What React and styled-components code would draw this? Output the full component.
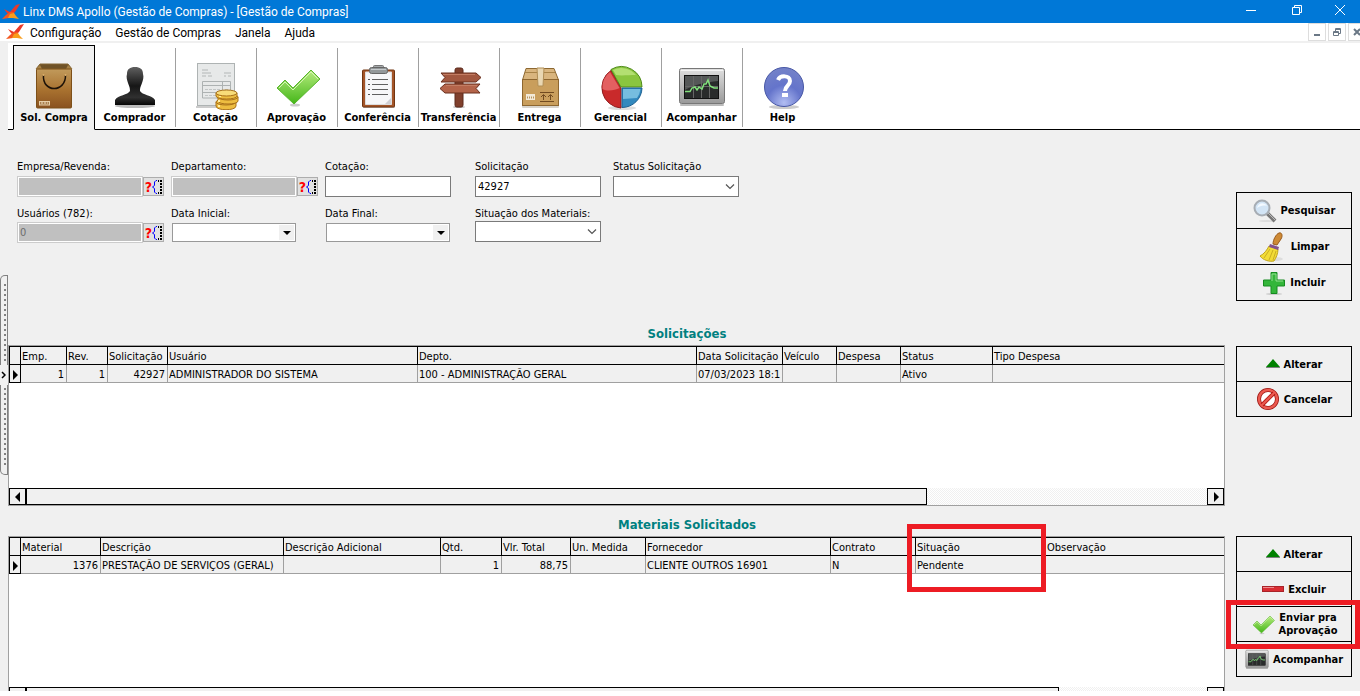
import React, { useState } from 'react'
import styled, { createGlobalStyle, css } from 'styled-components';

const SOLICITACAO_COLS = [
  { title: 'Emp.', width: 46, align: 'right', value: '1' },
  { title: 'Rev.', width: 41, align: 'right', value: '1' },
  { title: 'Solicitação', width: 60, align: 'right', value: '42927' },
  { title: 'Usuário', width: 250, value: 'ADMINISTRADOR DO SISTEMA' },
  { title: 'Depto.', width: 279, value: '100 - ADMINISTRAÇÃO GERAL' },
  { title: 'Data Solicitação', width: 86, value: '07/03/2023 18:1' },
  { title: 'Veículo', width: 54, value: '' },
  { title: 'Despesa', width: 64, value: '' },
  { title: 'Status', width: 92, value: 'Ativo' },
  { title: 'Tipo Despesa', value: '' },
];

const MATERIAL_COLS = [
  { title: 'Material', width: 80, align: 'right', value: '1376' },
  { title: 'Descrição', width: 183, value: 'PRESTAÇÃO DE SERVIÇOS (GERAL)' },
  { title: 'Descrição Adicional', width: 157, value: '' },
  { title: 'Qtd.', width: 61, align: 'right', value: '1' },
  { title: 'Vlr. Total', width: 69, align: 'right', value: '88,75' },
  { title: 'Un. Medida', width: 75, value: '' },
  { title: 'Fornecedor', width: 185, value: 'CLIENTE OUTROS 16901' },
  { title: 'Contrato', width: 85, value: 'N' },
  { title: 'Situação', width: 130, value: 'Pendente', marked: true },
  { title: 'Observação', value: '' },
];

/* ---------- icons ---------- */

function Logo() {
  return (
    <svg width="18" height="16" viewBox="0 0 18 16" aria-hidden="true">
      <path d="M18 0 L14 1 L8 8 L2 5 L5 9 L7 11 L10 11 L13 8 Z" fill="#e8392b" />
      <path d="M8 8 L4 11 L0 15 L7 14 L12 11 L12 8 Z" fill="#f4581f" />
      <path d="M8 10 L12 9 L14 12 L17 15 L11 14 L6 14 Z" fill="#f99d1c" />
    </svg>
  )
}

function BagIcon() {
  return (
    <svg width="48" height="48" viewBox="0 0 48 48" aria-hidden="true">
      <defs>
        <linearGradient id="bag" x1="0" y1="0" x2="0" y2="1">
          <stop offset="0" stopColor="#c19a5b" />
          <stop offset=".55" stopColor="#a8712f" />
          <stop offset="1" stopColor="#8a5220" />
        </linearGradient>
      </defs>
      <path d="M10 2 H38 L42 7 H6 Z" fill="#6f5227" stroke="#856637" />
      <path d="M6 7 L10 3 L12 7 M42 7 L38 3 L36 7" fill="#a78145" />
      <rect x="6.500" y="7" width="35" height="39" rx="1" fill="url(#bag)" stroke="#7d5019" />
      <path d="M13.500 13 C12 31 36 31 35.500 13" fill="none" stroke="#1d1208" strokeWidth="1.500" />
      <circle cx="13.500" cy="13" r="1" fill="#ddb06c" />
      <circle cx="35.500" cy="13" r="1" fill="#ddb06c" />
      <rect x="9.500" y="39.500" width="10" height="3.500" fill="#a97f4c" stroke="#e6cfa8" />
      <path d="M11 41 H18" stroke="#f2dfc0" strokeDasharray="2 1" />
    </svg>
  )
}

function PersonIcon() {
  return (
    <svg width="48" height="48" viewBox="0 0 48 48" aria-hidden="true">
      <defs>
        <linearGradient id="person" x1="0" y1="0" x2="0" y2="1">
          <stop offset="0" stopColor="#606060" />
          <stop offset=".5" stopColor="#161616" />
          <stop offset=".8" stopColor="#303030" />
          <stop offset="1" stopColor="#050505" />
        </linearGradient>
      </defs>
      <ellipse cx="24" cy="44" rx="20" ry="2" fill="#bbb" />
      <path d="M24 5 C29 5 32 7 32 12 C33 15 32 18 31 21 C30 24 29 25 29 29 C31 33 41 33 44 38 L44 43 H4 L4 38 C7 33 17 33 19 29 C19 25 18 24 17 21 C16 18 15 15 16 12 C16 7 19 5 24 5 Z" fill="url(#person)" />
    </svg>
  )
}

function QuoteIcon() {
  return (
    <svg width="48" height="48" viewBox="0 0 48 48" aria-hidden="true">
      <rect x="4" y="44" width="36" height="2" fill="#ccc" />
      <rect x="5.500" y="1.500" width="37" height="42" fill="#e7e9e9" stroke="#aeb3b3" />
      <path d="M10 8 H16 M10 11 H19 M10 14 H14 M16 14 H20 M32 11 H39 M32 14 H34 M36 14 H39" stroke="#b3b7b7" />
      <path d="M10.500 19.500 H38.500 V36 H10.500 Z M10.500 23.500 H38.500 M10.500 30.500 H38.500 M30.500 19 V36" fill="none" stroke="#adb2b2" />
      <path d="M13 27.500 H28 M33 27.500 H37 M13 33.500 H28" stroke="#c2c6c6" strokeDasharray="3 1" />
      <g fill="#edbd40" stroke="#a9711a">
        <path d="M24 40 V44 C24 49 44 49 44 44 V40" />
        <ellipse cx="34" cy="40" rx="10" ry="3" />
        <path d="M26 35 V39 C26 43 46 43 46 39 V35" />
        <ellipse cx="36" cy="35" rx="10" ry="3" />
        <path d="M24 31 V34 C24 38 45 38 45 34 V31" />
        <ellipse cx="34.500" cy="31" rx="10.500" ry="3" fill="#f8dc79" />
      </g>
      <path d="M27 38 V40 M27 43 V45 M28 34 V35" stroke="#fff0a8" strokeWidth="2" />
    </svg>
  )
}

function CheckIcon({ size = 48 }) {
  return (
    <svg width={size} height={size} viewBox="0 0 48 48" aria-hidden="true">
      <defs>
        <linearGradient id="check" x1="0" y1="0" x2="0" y2="1">
          <stop offset="0" stopColor="#b7ec7f" />
          <stop offset="1" stopColor="#44b618" />
        </linearGradient>
      </defs>
      <ellipse cx="22" cy="43" rx="5" ry="1.500" fill="#ccc" />
      <path d="M4 26 L12 18 L20 26 L38 8 L47 17 L21 42 Z" fill="url(#check)" stroke="#58b52d" />
      <path d="M6 26 L12 20 L20 28 L38 10 L45 17" fill="none" stroke="#d5f5b3" />
    </svg>
  )
}

function ClipboardIcon() {
  return (
    <svg width="48" height="48" viewBox="0 0 48 48" aria-hidden="true">
      <rect x="9" y="44" width="32" height="2" rx="1" fill="#bbb" />
      <rect x="8.500" y="8" width="32" height="37" rx="1" fill="#a45529" stroke="#713511" />
      <path d="M11.500 10 H37.500 V42.500 H11.500 Z" fill="#f7f7f9" stroke="#ddd" />
      <path d="M31 42 L37 36 V42 Z" fill="#cfcfd4" />
      <path d="M18 17.500 H34 M18 22.500 H34 M18 27.500 H34 M18 32.500 H34" stroke="#606060" />
      <path d="M14 17.500 H16 M14 22.500 H16 M14 27.500 H16 M14 32.500 H16" stroke="#555" />
      <rect x="19.500" y="3.500" width="10" height="4" rx="1" fill="#a6aaac" stroke="#777" />
      <rect x="15.500" y="5.500" width="18" height="6" rx="2" fill="#93989a" stroke="#666" />
      <path d="M17 7.500 H32" stroke="#c7cbcd" />
    </svg>
  )
}

function SignIcon() {
  return (
    <svg width="48" height="48" viewBox="0 0 48 48" aria-hidden="true">
      <ellipse cx="24" cy="45" rx="6" ry="1" fill="#bbb" />
      <rect x="20" y="6" width="8" height="39" rx="2" fill="#80402d" stroke="#5c2a1c" />
      <path d="M6 11 H41 L46 15.500 L41 20 H6 L10 15.500 Z" fill="#a25840" stroke="#6a301f" />
      <path d="M10 22 H45 L41 26.500 L45 31 H10 L5 26.500 Z" fill="#b4644a" stroke="#6a301f" />
      <path d="M8 12.500 H40 M11 23.500 H42" stroke="#c37d63" />
    </svg>
  )
}

function BoxIcon() {
  return (
    <svg width="48" height="48" viewBox="0 0 48 48" aria-hidden="true">
      <rect x="6" y="43" width="37" height="3" rx="1" fill="#d8d4cc" />
      <path d="M10 6.500 H38 L42.500 18 H6.500 Z" fill="#d9b57e" stroke="#8d6832" />
      <path d="M9 10.500 H39" stroke="#a88347" />
      <rect x="6.500" y="17.500" width="36" height="26" fill="#c99e5c" stroke="#8e6730" />
      <path d="M21 6 H28 L27 24 H22 Z" fill="#e9d7b2" stroke="#b18e55" />
      <rect x="10" y="32" width="9" height="6" fill="#f3ead8" />
      <path d="M11 35.500 H18" stroke="#b59361" strokeWidth="2" strokeDasharray="1 1" />
      <path d="M24 30.500 H38 M24 39.500 H38 M27.500 38 V33 M25 35 L27.500 32.500 L30 35 M34.500 38 V33 M32 35 L34.500 32.500 L37 35" fill="none" stroke="#714b20" />
    </svg>
  )
}

function PieIcon() {
  return (
    <svg width="48" height="48" viewBox="0 0 48 48" aria-hidden="true">
      <ellipse cx="25" cy="46" rx="14" ry="2" fill="#ddd" />
      <path d="M24 26 L14 8.500 A20.500 20.500 0 0 0 24 46 Z" fill="#c92a2b" stroke="#8f1a1c" />
      <path d="M24 25 L14 7.500 A20.500 20.500 0 0 1 45 25 Z" fill="#8ac53f" stroke="#4e8b19" />
      <path d="M25 26 H45 A20 20 0 0 1 25 45.500 Z" fill="#3289be" stroke="#1b5f91" />
      <path d="M26 27 H43.500 A19 19 0 0 1 40 36 L26 37 Z" fill="#76bddf" />
      <path d="M13 10 A19 19 0 0 0 5.500 27 C11 30 18 28 22.500 26 Z" fill="#e36061" />
      <path d="M16 8 A19 19 0 0 1 39 13 C32 13 24 14 19 13 Z" fill="#b3df71" />
    </svg>
  )
}

function MonitorIcon({ width = 48, height = 48 }) {
  return (
    <svg width={width} height={height} viewBox="0 0 48 48" aria-hidden="true">
      <defs>
        <linearGradient id="monitor" x1="0" y1="0" x2="0" y2="1">
          <stop offset="0" stopColor="#e0e0e0" />
          <stop offset="1" stopColor="#999" />
        </linearGradient>
      </defs>
      <rect x="2" y="42" width="44" height="2" rx="1" fill="#bbb" />
      <rect x="1.500" y="6.500" width="45" height="35" rx="2" fill="url(#monitor)" stroke="#777" />
      <path d="M3 8.500 H45" stroke="#f5f5f5" />
      <rect x="6.500" y="13.500" width="34" height="23" fill="#292b2b" stroke="#111" />
      <path d="M7 14 H40 V19 C28 20 15 23 7 28 Z" fill="#555858" />
      <path d="M15.500 14 V36 M23.500 14 V36 M31.500 14 V36 M7 24.500 H40" stroke="#666" />
      <path d="M7 29.500 H12 L14 26 L17 25 L19 28 L21 25 L24 27 L26 22 L28 22 L30 18 L32 24 L34 25 L36 26 H40" fill="none" stroke="#82e07c" strokeWidth="1.500" />
    </svg>
  )
}

function HelpIcon() {
  return (
    <svg width="48" height="48" viewBox="0 0 48 48" aria-hidden="true">
      <defs>
        <radialGradient id="help" cx=".5" cy=".9" r=".9">
          <stop offset="0" stopColor="#b1bdf2" />
          <stop offset=".5" stopColor="#6474cb" />
          <stop offset="1" stopColor="#7482c8" />
        </radialGradient>
      </defs>
      <ellipse cx="25" cy="45" rx="15" ry="2" fill="#ccc" />
      <circle cx="25" cy="25" r="19.500" fill="url(#help)" stroke="#4757a5" />
      <path d="M19 18 C21 13 31 13 31 19 C31 24 26 23.500 26 29" fill="none" stroke="#fff" strokeWidth="4" />
      <rect x="23" y="31" width="6" height="4" fill="#fff" />
    </svg>
  )
}

function SearchIcon() {
  return (
    <svg width="24" height="24" viewBox="0 0 24 24" aria-hidden="true">
      <ellipse cx="14" cy="22" rx="8" ry="1" fill="#ddd" />
      <path d="M14 14 L22 22" stroke="#777" strokeWidth="4" />
      <path d="M14 13 L22 21" stroke="#bbb" strokeWidth="1" />
      <circle cx="9" cy="9" r="7.500" fill="#d2e4f5" stroke="#a7adb4" strokeWidth="2" />
      <path d="M4 9 C5 3 12 3 14 7 C10 6 7 7 4 9 Z" fill="#f3f9ff" />
    </svg>
  )
}

function BroomIcon() {
  return (
    <svg width="28" height="30" viewBox="0 0 28 30" aria-hidden="true">
      <ellipse cx="15" cy="27" rx="9" ry="2" fill="#ddd" />
      <path d="M14 12 C14 8 17 2 20 1 C23 0 24 4 22 7 L18 13 Z" fill="#ce8a35" stroke="#995b1d" />
      <path d="M10 14 L19 17 C19 22 17 26 15 29 C10 30 4 28 1 24 C5 22 8 18 10 14 Z" fill="#f2dc36" stroke="#c1a31c" />
      <path d="M11 17 L5 26 M14 18 L10 28 M17 19 L14 28" stroke="#c9ad24" />
      <path d="M11 12 L20 15 L19 18 L10 15 Z" fill="#83518d" />
    </svg>
  )
}

function PlusIcon() {
  return (
    <svg width="24" height="24" viewBox="0 0 24 24" aria-hidden="true">
      <ellipse cx="12" cy="23" rx="8" ry="1" fill="#ccc" />
      <path d="M9 1.500 H15 V9 H22.500 V15 H15 V22.500 H9 V15 H1.500 V9 H9 Z" fill="#34b63a" stroke="#168b20" />
      <path d="M10 10 V3 H14 V10 H21" fill="none" stroke="#93df90" />
    </svg>
  )
}

function UpIcon() {
  return (
    <svg width="14" height="10" viewBox="0 0 14 10" aria-hidden="true">
      <path d="M7 0 L14 8 H0 Z" fill="#008000" />
      <path d="M0 8.500 H14" stroke="#808080" />
    </svg>
  )
}

function BanIcon() {
  return (
    <svg width="24" height="24" viewBox="0 0 24 24" aria-hidden="true">
      <circle cx="12" cy="12" r="9" fill="#fff" stroke="#9d1713" strokeWidth="4" />
      <circle cx="12" cy="12" r="9" fill="none" stroke="#ec5a50" strokeWidth="2.500" />
      <path d="M6 18 L18 6" stroke="#b71c17" strokeWidth="4" />
      <path d="M5 19 L19 5" stroke="#ec5a50" strokeWidth="2" />
    </svg>
  )
}

function MinusIcon() {
  return (
    <svg width="22" height="8" viewBox="0 0 22 8" aria-hidden="true">
      <rect x=".5" y="1.500" width="21" height="5" fill="#d92d33" stroke="#a92329" />
      <path d="M1 2.500 H12" stroke="#f08c8f" />
    </svg>
  )
}

function LookupGlyph() {
  return (
    <svg width="10" height="14" viewBox="0 0 10 14" aria-hidden="true">
      <path d="M5 .5 H4 L2.500 2 V5.500 L.5 7 L2.500 8.500 V12 L4 13.500 H5" fill="none" stroke="#0000ff" />
      <path d="M6 1 H10" stroke="#000" strokeWidth="2" strokeDasharray="1 1" />
      <path d="M9 0 V14" stroke="#000" strokeWidth="2" strokeDasharray="2 1" />
      <path d="M6 13 H10" stroke="#000" strokeWidth="2" strokeDasharray="1 1" />
    </svg>
  )
}

const Chevron = () => (
  <svg width="10" height="6" viewBox="0 0 10 6" aria-hidden="true">
    <path d="M1 .5 L5 4.500 L9 .5" fill="none" stroke="#555" strokeWidth="1.200" />
  </svg>
);

const Arrow = ({ dir }) => (
  <svg width="8" height="10" viewBox="0 0 8 10" aria-hidden="true">
    <path d={dir === 'left' ? 'M6 0 V10 L1 5 Z' : 'M2 0 V10 L7 5 Z'} fill="#000" />
  </svg>
);

const TOOLS = [
  { label: 'Sol. Compra', icon: <BagIcon /> },
  { label: 'Comprador', icon: <PersonIcon /> },
  { label: 'Cotação', icon: <QuoteIcon /> },
  { label: 'Aprovação', icon: <CheckIcon /> },
  { label: 'Conferência', icon: <ClipboardIcon /> },
  { label: 'Transferência', icon: <SignIcon /> },
  { label: 'Entrega', icon: <BoxIcon /> },
  { label: 'Gerencial', icon: <PieIcon /> },
  { label: 'Acompanhar', icon: <MonitorIcon /> },
  { label: 'Help', icon: <HelpIcon /> },
];

/* ---------- parts ---------- */

function LookupField({ id, label, value, gap }) {
  return (
    <Field $gap={gap}>
      <label htmlFor={id}>{label}</label>
      <LookupRow>
        <DisabledInput id={id} defaultValue={value} disabled />
        <LookupButton type="button" aria-label={`Buscar ${label}`}>
          <b>?</b>
          <LookupGlyph />
        </LookupButton>
      </LookupRow>
    </Field>
  )
}

function DateField({ id, label, gap }) {
  return (
    <Field $gap={gap}>
      <label htmlFor={id}>{label}</label>
      <DateBox>
        <input id={id} type="text" />
        <button type="button" aria-label={`Abrir ${label}`}>
          <svg width="8" height="4" viewBox="0 0 8 4" aria-hidden="true"><path d="M0 0 H8 L4 4 Z" /></svg>
        </button>
      </DateBox>
    </Field>
  )
}

function SelectField({ id, label, gap }) {
  return (
    <Field $gap={gap}>
      <label htmlFor={id}>{label}</label>
      <SelectBox>
        <select id={id} defaultValue="">
          <option value=""></option>
        </select>
        <Chevron />
      </SelectBox>
    </Field>
  )
}

function DataGrid({ cols, thumb }) {
  return (
    <GridFrame>
      <GridBody>
        <Table>
          <colgroup>
            <col style={{ width: 12 }} />
            {cols.map(c => <col key={c.title} style={{ width: c.width }} />)}
          </colgroup>
          <thead>
            <tr>
              <Th aria-label="Linha atual" $first />
              {cols.map(c => (
                <Th key={c.title}>
                  {c.title}
                  {c.marked && <CellMark />}
                </Th>
              ))}
            </tr>
          </thead>
          <tbody>
            <tr>
              <Pointer><Arrow dir="right" /></Pointer>
              {cols.map(c => <Td key={c.title} $align={c.align}>{c.value}</Td>)}
            </tr>
          </tbody>
        </Table>
      </GridBody>
      <ScrollBar>
        <ScrollButton aria-label="Rolar para a esquerda"><Arrow dir="left" /></ScrollButton>
        <Track><Thumb $size={thumb} /></Track>
        <ScrollButton aria-label="Rolar para a direita"><Arrow dir="right" /></ScrollButton>
      </ScrollBar>
    </GridFrame>
  )
}

function App() {
  const [tool, setTool] = useState('Sol. Compra');

  return (
    <Window>
      <GlobalStyle />
      <TitleBar>
        <Logo />
        <h1>Linx DMS Apollo (Gestão de Compras) - [Gestão de Compras]</h1>
        <WindowButton aria-label="Minimizar">
          <svg width="12" height="12" viewBox="0 0 12 12"><path d="M1 6.500 H11" /></svg>
        </WindowButton>
        <WindowButton aria-label="Restaurar">
          <svg width="12" height="12" viewBox="0 0 12 12"><path d="M1.500 3.500 H8.500 V10.500 H1.500 Z M3.500 3 V1.500 H10.500 V8.500 H9" /></svg>
        </WindowButton>
        <WindowButton aria-label="Fechar">
          <svg width="12" height="12" viewBox="0 0 12 12"><path d="M1 1 L11 11 M11 1 L1 11" /></svg>
        </WindowButton>
      </TitleBar>

      <MenuBar>
        <Logo />
        <MenuItem>Configuração</MenuItem>
        <MenuItem>Gestão de Compras</MenuItem>
        <MenuItem>Janela</MenuItem>
        <MenuItem>Ajuda</MenuItem>
        <ChildButtons>
          <button aria-label="Minimizar janela">
            <svg width="8" height="8" viewBox="0 0 8 8"><path d="M1 7 H7" /></svg>
          </button>
          <button aria-label="Restaurar janela">
            <svg width="8" height="8" viewBox="0 0 8 8"><path d="M.5 3.500 H5.500 V7.500 H.5 Z M.5 4.500 H5.500 M2.500 3 V.5 H7.500 V5.500 H6 M2.500 1.500 H7.500" /></svg>
          </button>
          <button aria-label="Fechar janela">
            <svg width="8" height="8" viewBox="0 0 8 8"><path d="M1 1 L7 7 M7 1 L1 7" /></svg>
          </button>
        </ChildButtons>
      </MenuBar>

      <Toolbar>
        {TOOLS.map(t => (
          <ToolButton key={t.label} $active={t.label === tool} onClick={() => setTool(t.label)}>
            {t.icon}
            <span>{t.label}</span>
          </ToolButton>
        ))}
        <ToolbarRest />
      </Toolbar>

      <Workspace>
        <Splitter>
          <Dots $top />
          <button aria-label="Expandir painel">
            <svg width="5" height="8" viewBox="0 0 5 8"><path d="M1 1 L4 4 L1 7" fill="none" stroke="#000" strokeWidth="1.500" /></svg>
          </button>
          <Dots />
        </Splitter>

        <Content>
          <Filters>
            <Fields>
              <LookupField id="empresa" label="Empresa/Revenda:" value="" />
              <LookupField id="depto" label="Departamento:" value="" />
              <Field>
                <label htmlFor="cotacao">Cotação:</label>
                <TextInput id="cotacao" />
              </Field>
              <Field>
                <label htmlFor="solicitacao">Solicitação</label>
                <TextInput id="solicitacao" defaultValue="42927" />
              </Field>
              <SelectField id="status" label="Status Solicitação" />
              <LookupField id="usuarios" label="Usuários (782):" value="0" gap={1} />
              <DateField id="inicial" label="Data Inicial:" gap={1} />
              <DateField id="final" label="Data Final:" gap={1} />
              <SelectField id="situacao" label="Situação dos Materiais:" gap={0} />
            </Fields>
            <Actions $rowHeight={36}>
              <ActionButton><SearchIcon />Pesquisar</ActionButton>
              <ActionButton><BroomIcon />Limpar</ActionButton>
              <ActionButton><PlusIcon />Incluir</ActionButton>
            </Actions>
          </Filters>

          <Section>
            <h2>Solicitações</h2>
            <SectionRow>
              <DataGrid cols={SOLICITACAO_COLS} thumb="76.3%" />
              <Actions $rowHeight={35}>
                <ActionButton><UpIcon />Alterar</ActionButton>
                <ActionButton><BanIcon />Cancelar</ActionButton>
              </Actions>
            </SectionRow>
          </Section>

          <Section>
            <h2>Materiais Solicitados</h2>
            <SectionRow>
              <DataGrid cols={MATERIAL_COLS} thumb="87.5%" />
              <Actions $rowHeight={35}>
                <ActionButton><UpIcon />Alterar</ActionButton>
                <ActionButton><MinusIcon />Excluir</ActionButton>
                <ActionButton>
                  <CheckIcon size={24} />
                  <span>Enviar pra<br />Aprovação</span>
                  <ButtonMark />
                </ActionButton>
                <ActionButton><MonitorIcon width={24} height={24} />Acompanhar</ActionButton>
              </Actions>
            </SectionRow>
          </Section>
        </Content>
      </Workspace>
    </Window>
  )
}

/* ---------- styles ---------- */

const GlobalStyle = createGlobalStyle`
  * { box-sizing: border-box; }
  body {
    margin: 0;
    background: #fff;
    color: #000;
    font-family: "DejaVu Sans Condensed", "DejaVu Sans", sans-serif;
    font-size: 11px;
    line-height: 14px;
  }
  button, input, select {
    font: inherit;
    color: inherit;
    margin: 0;
    padding: 0;
    border: none;
    border-radius: 0;
    background: none;
    outline: none;
  }
  h1, h2 { margin: 0; }
  svg { display: block; flex: none; }
`;

const Window = styled.div`
  display: flex;
  flex-direction: column;
  height: 100vh;
  padding-bottom: 5px;
`;

const TitleBar = styled.header`
  display: flex;
  align-items: center;
  height: 23px;
  flex: none;
  padding-left: 2px;
  background: #0078d7;
  color: #fff;
  h1 {
    flex: 1;
    padding-left: 3px;
    font: 400 12px/16px Roboto, sans-serif;
  }
`;

const WindowButton = styled.button`
  width: 46px;
  height: 23px;
  display: flex;
  justify-content: center;
  padding-top: 4px;
  &:last-child { width: 40px; }
  path {
    fill: none;
    stroke: #fff;
  }
`;

const MenuBar = styled.nav`
  display: flex;
  align-items: center;
  height: 20px;
  flex: none;
  padding-left: 6px;
  border-bottom: 2px solid #f0f0f0;
  overflow: hidden;
`;

const MenuItem = styled.button`
  font: 400 12px/16px Roboto, sans-serif;
  padding: 1px 8px 0 6px;
`;

const ChildButtons = styled.div`
  display: flex;
  gap: 2px;
  margin-left: auto;
  margin-right: -6px;
  button {
    display: grid;
    place-items: center;
    width: 18px;
    height: 18px;
    border: 1px solid #ddd;
  }
  path {
    fill: none;
    stroke: #6b7886;
    stroke-width: 2;
  }
  button:nth-child(2) path { stroke-width: 1; }
`;

const Toolbar = styled.div`
  display: flex;
  flex: none;
  padding-top: 2px;
  border-left: 8px solid #f0f0f0;
  &:before {
    content: "";
    width: 5px;
    border-bottom: 1px solid #000;
  }
`;

const ToolButton = styled.button`
  position: relative;
  display: flex;
  flex-direction: column;
  align-items: center;
  width: 81px;
  height: 85px;
  padding: 17px 2px 0 0;
  border-bottom: 1px solid #000;
  font-weight: 700;
  white-space: nowrap;
  span { margin-top: 1px; }

  /* separator stops short of the baseline */
  &:not(:nth-last-child(2)):after {
    content: "";
    position: absolute;
    right: 0;
    top: 3px;
    height: 79px;
    border-right: 1px solid #a0a0a0;
  }

  ${props => props.$active && css`
    width: 82px;
    padding: 16px 0 0;
    background: #f0f0f0;
    border: 1px solid #000;
    border-bottom-color: #f0f0f0;
    &&:after { display: none; }
  `}
`;

const ToolbarRest = styled.div`
  flex: 1;
  border-bottom: 1px solid #000;
`;

const Workspace = styled.main`
  display: flex;
  flex: 1;
  min-height: 0;
  overflow: hidden;
  background: #f0f0f0;
`;

const Splitter = styled.aside`
  display: flex;
  flex-direction: column;
  flex: none;
  width: 8px;
  padding-top: 145px;
  button {
    height: 20px;
    display: grid;
    place-items: center start;
    padding-left: 1px;
  }
`;

const Dots = styled.div`
  height: 90px;
  border: 1px solid #808080;
  border-width: ${props => props.$top ? '1px 1px 0 1px' : '0 1px 1px 1px'};
  border-radius: ${props => props.$top ? '5px 0 0 0' : '0 0 0 5px'};
  background: repeating-linear-gradient(#808080 0 2px, transparent 2px 5px) 3px ${props => props.$top ? '8px' : '3px'} / 2px 78px no-repeat;
`;

const Content = styled.div`
  flex: 1;
  min-width: 0;
  display: flex;
  flex-direction: column;
  padding-right: 8px;
`;

const Filters = styled.div`
  display: flex;
  justify-content: space-between;
  align-items: flex-start;
  height: 197px;
  flex: none;
  & > :last-child { margin-top: 62px; }
`;

const Fields = styled.form`
  display: grid;
  grid-template-columns: 154px 154px 150px 138px 127px;
  row-gap: 2px;
  padding: 30px 0 0 9px;
`;

const Field = styled.div`
  display: flex;
  flex-direction: column;
  align-items: flex-start;
  height: 45px;
  gap: ${props => props.$gap ?? 2}px;
`;

const TextInput = styled.input`
  width: 126px;
  height: 21px;
  padding: 0 2px;
  background: #fff;
  border: 1px solid #7a7a7a;
`;

const DisabledInput = styled(TextInput)`
  background: #c0c0c0;
  border-color: #ccc;
  box-shadow: inset 0 0 0 1px #fff;
  color: #6d6d6d;
`;

const LookupRow = styled.div`
  display: flex;
  align-items: center;
`;

const LookupButton = styled.button`
  display: flex;
  align-items: center;
  justify-content: center;
  width: 21px;
  height: 19px;
  border: 1px solid #adadad;
  background: #e1e1e1;
  b {
    color: #f00;
    font-size: 14px;
  }
`;

const DateBox = styled.div`
  display: flex;
  align-items: center;
  width: 124px;
  height: 19px;
  margin: 1px 0 0 1px;
  padding-right: 1px;
  border: 1px solid #999;
  background: #fff;
  input {
    flex: 1;
    min-width: 0;
    padding-left: 2px;
  }
  button {
    display: grid;
    place-items: center;
    width: 15px;
    height: 15px;
    background: #f0f0f0;
  }
`;

const SelectBox = styled.div`
  display: grid;
  align-items: center;
  width: 126px;
  height: 21px;
  border: 1px solid #7a7a7a;
  background: #fff;
  select, svg { grid-area: 1 / 1; }
  select {
    appearance: none;
    height: 19px;
  }
  svg {
    justify-self: end;
    margin-right: 3px;
    pointer-events: none;
  }
`;

const Section = styled.section`
  flex: none;
  margin-bottom: 12px;
  h2 {
    height: 18px;
    padding-left: 14px;
    color: #008080;
    font-size: 13px;
    line-height: 14px;
    text-align: center;
  }
`;

const SectionRow = styled.div`
  display: flex;
  gap: 11px;
  align-items: flex-start;
`;

const GridFrame = styled.div`
  display: flex;
  flex-direction: column;
  flex: 1;
  min-width: 0;
  height: 161px;
  border: 1px solid #a0a0a0;
  background: #fff;
  ${Section}:last-child & { height: 169px; }
`;

const GridBody = styled.div`
  flex: 1;
`;

const Table = styled.table`
  width: 100%;
  table-layout: fixed;
  border-collapse: separate;
  border-spacing: 0;
`;

const cell = css`
  height: 18px;
  padding: 2px 1px 0;
  background: #f0f0f0;
  font-weight: 400;
  line-height: 15px;
  white-space: nowrap;
`;

const Th = styled.th`
  ${cell}
  position: relative;
  height: 19px;
  text-align: left;
  border: solid #000;
  border-width: ${props => props.$first ? '1px' : '1px 1px 1px 0'};
  &:last-child { border-right: none; }
`;

const Td = styled.td`
  ${cell}
  overflow: hidden;
  padding-right: ${props => props.$align ? '2px' : '1px'};
  text-align: ${props => props.$align || 'left'};
  border: solid #a0a0a0;
  border-width: 0 1px 1px 0;
  &:last-child { border-right: none; }
`;

const Pointer = styled.td`
  ${cell}
  border: 1px solid #000;
  border-top: none;
`;

/* red marks drawn over the grid and the button */
const CellMark = styled.span`
  position: absolute;
  z-index: 2;
  top: -14px;
  left: -9px;
  right: -1px;
  height: 68px;
  border: 5px solid #ed1c24;
  pointer-events: none;
`;

const ButtonMark = styled.span`
  position: absolute;
  z-index: 2;
  inset: -7px -9px -8px -11px;
  border: 5px solid #ed1c24;
  pointer-events: none;
`;

const ScrollBar = styled.div`
  display: flex;
  height: 17px;
  flex: none;
`;

const ScrollButton = styled.button`
  display: grid;
  place-items: center;
  width: 17px;
  border: 1px solid #000;
  background: #f0f0f0;
`;

const Track = styled.div`
  flex: 1;
  display: flex;
  background: repeating-conic-gradient(#fff 0 25%, #f0f0f0 0 50%) 0 0 / 2px 2px;
`;

const Thumb = styled.div`
  width: ${props => props.$size};
  border: 1px solid #000;
  background: #f0f0f0;
`;

const Actions = styled.div`
  display: grid;
  flex: none;
  width: 116px;
  grid-auto-rows: ${props => props.$rowHeight}px;
  padding-bottom: 1px;
  ${Section}:not(:last-child) & { margin-top: 1px; }
`;

const ActionButton = styled.button`
  position: relative;
  display: flex;
  align-items: center;
  justify-content: center;
  gap: 4px;
  margin-bottom: -1px;
  border: 1px solid #000;
  font-weight: 700;
  line-height: 13px;
`;

export default App;
